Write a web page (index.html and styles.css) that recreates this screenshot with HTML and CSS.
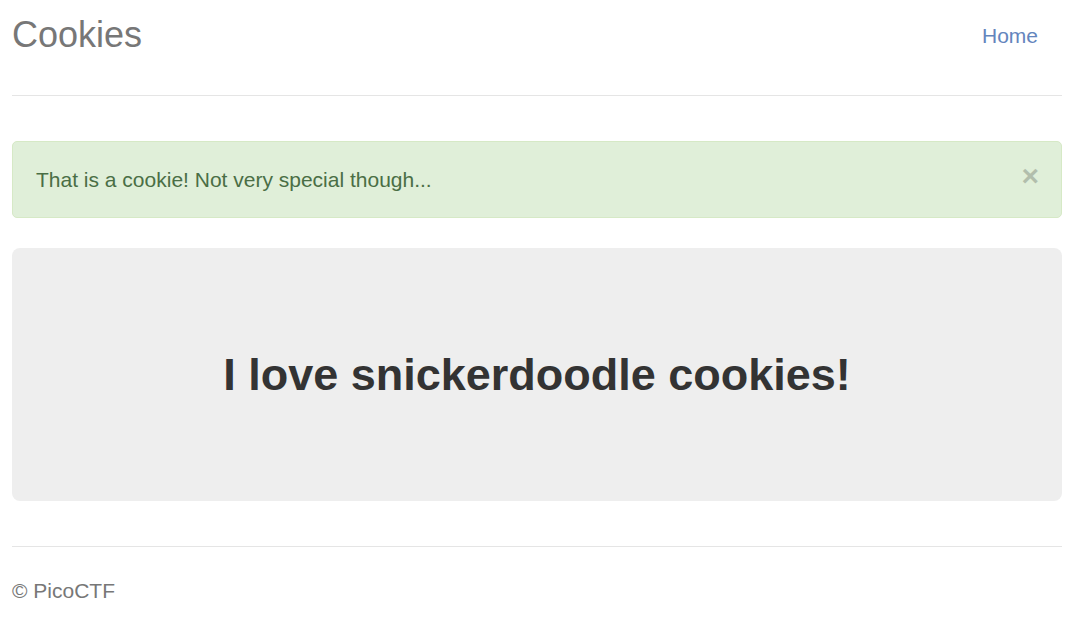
FILE: index.html
```html
<!DOCTYPE html>
<html>
<head>
<meta charset="utf-8">
<link rel="stylesheet" href="styles.css">
</head>
<body>
<div class="container">
  <div class="header">
    <h3 class="brand">Cookies</h3>
    <nav class="nav">
      <a class="nav-link" href="#">Home</a>
    </nav>
  </div>
  <div class="alert">
    <span class="alert-text">That is a cookie! Not very special though...</span>
    <span class="close">&times;</span>
  </div>
  <div class="jumbotron">
    <h1 class="jumbo-title">I love snickerdoodle cookies!</h1>
  </div>
  <footer class="footer">
    <p class="footer-text">&copy; PicoCTF</p>
  </footer>
</div>
</body>
</html>
```

FILE: styles.css
```css
* { box-sizing: border-box; }
html, body { margin: 0; padding: 0; }
body {
  font-family: "Liberation Sans", Arial, sans-serif;
  color: #333;
  background: #fff;
}
.container {
  padding: 0 24px 0 12px;
  width: 1086px;
}
.header {
  display: flex;
  justify-content: space-between;
  align-items: flex-start;
  border-bottom: 1px solid #e5e5e5;
  height: 96px;
}
.brand {
  margin: 0;
  padding-top: 14px;
  font-size: 36px;
  font-weight: 400;
  line-height: 42px;
  color: #777;
}
.nav { padding-top: 22px; }
.nav-link {
  display: block;
  padding: 0 24px 0 0;
  font-size: 21px;
  line-height: 28px;
  color: #6485bd;
  text-decoration: none;
}
.alert {
  margin-top: 45px;
  height: 77px;
  display: flex;
  align-items: center;
  justify-content: space-between;
  padding: 0 22px 0 23px;
  background: #e0efd9;
  border: 1px solid #d6e9c6;
  border-radius: 5px;
  color: #4a6e45;
}
.alert-text {
  font-size: 21px;
  padding-top: 1px;
}
.close {
  font-size: 30px;
  font-weight: 700;
  color: #000;
  opacity: 0.2;
  line-height: 1;
  align-self: flex-start;
  margin-top: 19px;
}
.jumbotron {
  margin-top: 30px;
  height: 253px;
  background: #eee;
  border-radius: 8px;
  display: flex;
  align-items: center;
  justify-content: center;
}
.jumbo-title {
  margin: 0;
  font-size: 45px;
  font-weight: 700;
  color: #333;
}
.footer {
  margin-top: 45px;
  border-top: 1px solid #e5e5e5;
}
.footer-text {
  margin: 0;
  padding-top: 32px;
  font-size: 21px;
  color: #777;
}
```
